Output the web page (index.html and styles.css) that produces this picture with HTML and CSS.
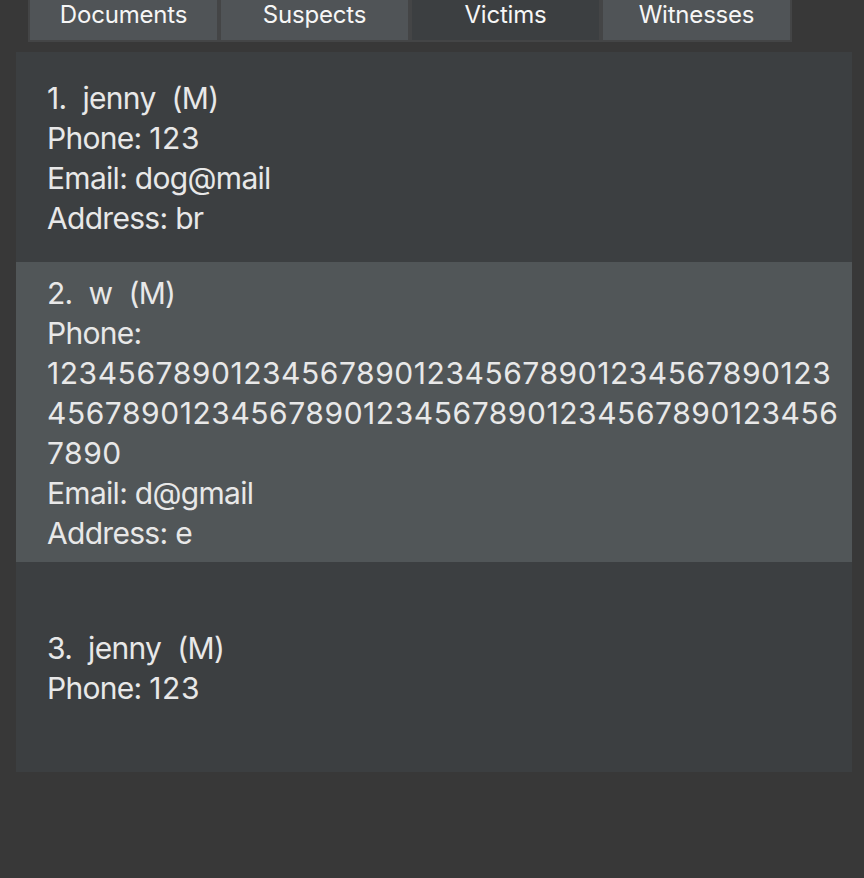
FILE: index.html
```html
<!DOCTYPE html>
<html>
<head>
<meta charset="utf-8">
<link rel="stylesheet" href="styles.css">
</head>
<body>
<div class="app">
  <div class="tabbar">
    <div class="tabs">
      <div class="tab">Documents</div>
      <div class="tab">Suspects</div>
      <div class="tab selected">Victims</div>
      <div class="tab">Witnesses</div>
    </div>
  </div>
  <div class="list">
    <div class="cell">
      <div class="card">
        <div class="title"><span class="idx">1.</span><span class="name">jenny</span><span class="gender">(M)</span></div>
        <div class="line">Phone: <span class="num">123</span></div>
        <div class="line">Email: dog@mail</div>
        <div class="line">Address: br</div>
      </div>
    </div>
    <div class="cell selected">
      <div class="card">
        <div class="title"><span class="idx">2.</span><span class="name">w</span><span class="gender">(M)</span></div>
        <div class="line">Phone:<br><span class="num">1234567890123456789012345678901234567890123<br>4567890123456789012345678901234567890123456<br>7890</span></div>
        <div class="line">Email: d@gmail</div>
        <div class="line">Address: e</div>
      </div>
    </div>
    <div class="cell">
      <div class="card">
        <div class="title"><span class="idx">3.</span><span class="name">jenny</span><span class="gender">(M)</span></div>
        <div class="line">Phone: <span class="num">123</span></div>
      </div>
    </div>
  </div>
</div>
</body>
</html>
```

FILE: styles.css
```css
html, body {
  margin: 0;
  padding: 0;
  background: #383838;
  height: 100%;
}
body {
  font-family: Inter, "Open Sans", sans-serif;
  overflow: hidden;
}
.app {
  display: flex;
  flex-direction: column;
}
.tabbar {
  padding-left: 28px;
  height: 52px;
}
.tabs {
  display: flex;
  gap: 4px;
  width: 760px;
  background: #444546;
  padding: 0 2px 2px 2px;
}
.tab {
  width: 187px;
  height: 40px;
  background: #505457;
  color: #f6f6f6;
  font-size: 24px;
  line-height: 28px;
  text-align: center;
  box-sizing: border-box;
  padding-top: 1px;
  letter-spacing: -0.2px;
}
.tab.selected {
  background: #3c3f41;
}
.list {
  margin-left: 16px;
  width: 836px;
  background: #3c3f41;
  display: flex;
  flex-direction: column;
}
.cell {
  min-height: 210px;
  padding: 11px 0 9px 31px;
  box-sizing: border-box;
  display: flex;
  align-items: center;
  color: #e8e8e8;
  font-size: 30px;
  line-height: 40px;
  white-space: nowrap;
  overflow: hidden;
  letter-spacing: -0.7px;
}
.cell.selected {
  background: #515658;
}
.num {
  letter-spacing: 0.55px;
}
.title {
  display: flex;
  gap: 16px;
}
```
